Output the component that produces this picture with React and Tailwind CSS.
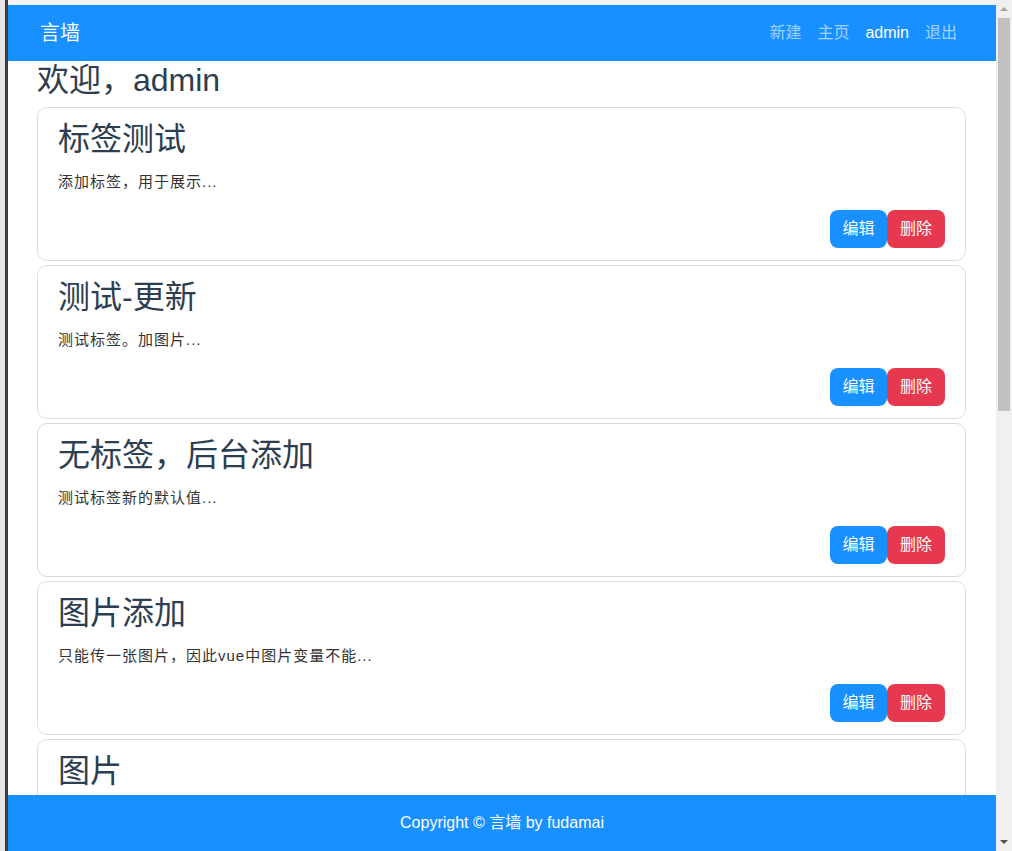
import React from 'react';

const posts = [
  { title: '标签测试', desc: '添加标签，用于展示...' },
  { title: '测试-更新', desc: '测试标签。加图片...' },
  { title: '无标签，后台添加', desc: '测试标签新的默认值...' },
  { title: '图片添加', desc: '只能传一张图片，因此vue中图片变量不能...' },
  { title: '图片', desc: '图片测试...' },
];

const font = { fontFamily: '"Liberation Sans", Arial, "Noto Sans CJK SC", sans-serif' };

const PostCard = ({ title, desc }) => (
  <div className="shrink-0 h-[154px] rounded-[10px] border border-[#dcdcdc] bg-white px-5 pt-3 pb-3 flex flex-col">
    <h2 className="text-[32px] leading-[1.2] text-[#2c3e50] m-0">{title}</h2>
    <p className="mt-[12px] text-[15px] tracking-[1px] leading-[22px] text-[#333]">{desc}</p>
    <div className="mt-auto flex justify-end">
      <button className="h-[38px] w-[57px] rounded-lg bg-[#1890ff] text-[16px] text-white">编辑</button>
      <button className="h-[38px] w-[58px] rounded-lg bg-[#e6384f] text-[16px] text-white">删除</button>
    </div>
  </div>
);

export default function App() {
  return (
    <div className="flex h-[851px] w-[1012px] overflow-hidden bg-white" style={font}>
      {/* window frame edge */}
      <div className="flex w-[8px] shrink-0">
        <div className="w-[5px] bg-[#e6e6e6]" />
        <div className="w-[3px] bg-[#3c3c3c]" />
      </div>

      {/* page */}
      <div className="flex w-[988px] shrink-0 flex-col">
        <div className="h-[5px] shrink-0 bg-[#f4f4f4]" />
        <nav className="flex h-[56px] shrink-0 items-center justify-between bg-[#1890ff] pl-[32px] pr-[31px]">
          <span className="text-[20px] text-white">言墙</span>
          <div className="flex items-center text-[16px]">
            <a className="px-2 text-white/60">新建</a>
            <a className="px-2 text-white/60">主页</a>
            <a className="px-2 text-white">admin</a>
            <a className="px-2 text-white/60">退出</a>
          </div>
        </nav>

        <main className="flex flex-1 flex-col overflow-hidden pl-[29px] pr-[30px]">
          <h2 className="mb-2 text-[32px] leading-[1.2] text-[#2c3e50]">欢迎，admin</h2>
          <div className="flex flex-col gap-1">
            {posts.map((p) => (
              <PostCard key={p.title} {...p} />
            ))}
          </div>
        </main>

        <footer className="flex h-[56px] shrink-0 items-center justify-center bg-[#1890ff] text-[16px] text-white">
          Copyright © 言墙 by fudamai
        </footer>
      </div>

      {/* scrollbar */}
      <div className="flex w-[16px] shrink-0 flex-col bg-[#f0f0f0]">
        <div className="flex h-[18px] items-center justify-center">
          <div className="h-0 w-0 border-x-[4px] border-b-[4px] border-x-transparent border-b-[#a3a3a3]" />
        </div>
        <div className="mx-[2px] h-[393px] bg-[#c1c1c1]" />
        <div className="flex-1" />
        <div className="flex h-[18px] items-center justify-center">
          <div className="h-0 w-0 border-x-[4px] border-t-[4px] border-x-transparent border-t-[#505050]" />
        </div>
      </div>
    </div>
  );
}
